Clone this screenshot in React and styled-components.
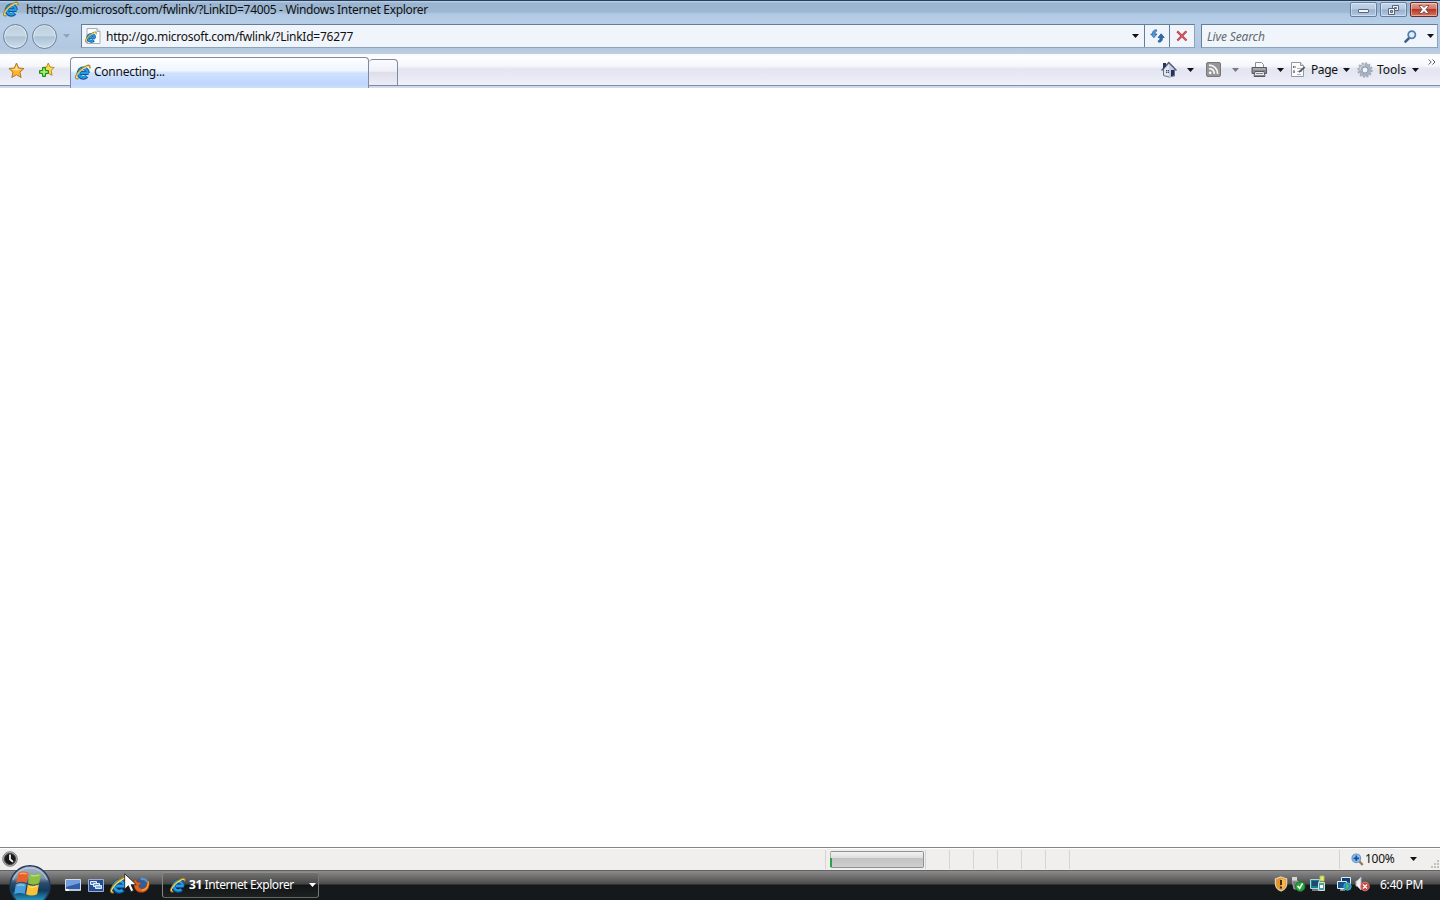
import React from 'react';
import styled, { createGlobalStyle } from 'styled-components';

const GlobalStyle = createGlobalStyle`
  * {
    box-sizing: border-box;
  }

  body {
    margin: 0;
    overflow: hidden;
    background: #fff;
    font-family: 'Noto Sans', 'Open Sans', sans-serif;
    font-size: 12px;
    line-height: 16px;
    color: #111;
  }

  svg {
    display: block;
    flex: none;
  }
`;

const Desktop = styled.div`
  position: relative;
  display: flex;
  flex-direction: column;
  width: 1440px;
  height: 900px;
  overflow: hidden;
`;

const Label = styled.span`
  white-space: pre;
  letter-spacing: ${(props) => props.$track || 0}px;
`;

const Frame = styled.header`
  height: 54px;
  background: linear-gradient(
    #233f62 0,
    #233f62 1px,
    #b9cbdf 1px,
    #b9cbdf 2px,
    #9ab3cf 3px,
    #9db7d3 12px,
    #b0c9e4 14px,
    #b9cfe8 24px,
    #b3c8e0 48px,
    #bfcfe1 54px
  );
`;

const TitleBar = styled.div`
  display: flex;
  align-items: center;
  height: 20px;
  padding: 0 2px 0 3px;

  > svg {
    margin-bottom: 2px;
  }
`;

const Title = styled(Label)`
  flex: 1;
  margin-left: 7px;
`;

const WindowButtons = styled.div`
  display: flex;
  gap: 3px;
  align-self: flex-start;
  margin-top: 2px;
`;

const WindowButton = styled.div`
  display: flex;
  align-items: center;
  justify-content: center;
  width: ${(props) => (props.$close ? 28 : 27)}px;
  height: 15px;
  border: 1px solid ${(props) => (props.$close ? '#652b31' : '#667f9f')};
  border-radius: 2px;
  box-shadow: inset 0 0 0 1px rgba(255, 255, 255, 0.4);
  background: ${(props) =>
    props.$close
      ? 'linear-gradient(#e3a296, #cf7567 45%, #b83626 50%, #d67659)'
      : 'linear-gradient(#c5d6e9, #b3c8e0 48%, #96b0cf 52%, #b1c9e5)'};
`;

const NavBar = styled.div`
  display: flex;
  align-items: center;
  height: 34px;
  padding: 0 2px 2px 3px;
`;

const RoundButton = styled.div`
  width: 25px;
  height: 25px;
  margin-right: 4px;
  border: 1px solid #6d8095;
  border-radius: 50%;
  box-shadow: inset 0 0 1px 1px rgba(238, 247, 255, 0.6);
  background: linear-gradient(#bccfe0 0, #c8d8e5 46%, #acc2d5 52%, #cbdeed 100%);
`;

const HistoryArrow = styled.div`
  width: 20px;
  padding-left: 2px;
`;

const Field = styled.div`
  display: flex;
  align-items: center;
  flex: none;
  width: ${(props) => props.$width}px;
  height: 24px;
  border: 1px solid #657d99;
  border-right-color: #8da3bd;
  border-bottom-color: #8da3bd;
  background: #f0f5fb;
`;

const AddressBar = styled(Field)`
  margin-right: 6px;
  padding-left: 3px;

  ${Label} {
    flex: 1;
    margin: 1px 0 0 5px;
  }
`;

const FieldButton = styled.div`
  display: flex;
  align-items: center;
  justify-content: center;
  width: ${(props) => props.$width}px;
  height: 22px;
  border-left: ${(props) => (props.$divided ? '1px solid #657d99' : '0')};
`;

const SearchText = styled(Label)`
  flex: 1;
  padding: 1px 0 0 5px;
  font-style: italic;
  color: #626972;
`;

const SearchButton = styled.div`
  width: 19px;
`;

const CommandBar = styled.div`
  display: flex;
  height: 34px;
  background: linear-gradient(
    #f7f9fd 0,
    #ffffff 3px,
    #f5f6fc 12px,
    #e3e5f0 15px,
    #e8ebf5 24px,
    #f0f3fb 31px,
    #858ea7 31px,
    #858ea7 32px,
    #ccd5e5 32px,
    #d5dfed 34px
  );
`;

const Favorites = styled.div`
  display: flex;
  gap: 13px;
  width: 70px;
  padding: 8px 0 0 8px;
`;

const ActiveTab = styled.div`
  display: flex;
  align-items: center;
  width: 299px;
  height: 31px;
  margin-top: 3px;
  padding: 0 0 2px 4px;
  border: 1px solid #8189a2;
  border-bottom: 0;
  border-radius: 4px 4px 0 0;
  background: linear-gradient(#ffffff, #edf5ff 43%, #cfe2ff 50%, #bed6fd 86%, #d0e0fa);

  ${Label} {
    margin-left: 3px;
  }
`;

const NewTab = styled.div`
  width: 29px;
  height: 27px;
  margin-top: 5px;
  border: 1px solid #8189a2;
  border-left: 0;
  border-radius: 4px 4px 0 0;
  background: linear-gradient(#fafbff, #f0f1f8 44%, #dedfea 50%, #eaedf7);
`;

const Commands = styled.div`
  display: flex;
  align-items: center;
  flex: 1;
  justify-content: flex-end;
  padding: 0 4px 3px 0;
`;

const Command = styled.div`
  display: flex;
  align-items: center;
  gap: ${(props) => props.$gap || 9}px;
  margin-right: ${(props) => props.$after}px;
`;

const CommandText = styled(Label)`
  width: ${(props) => props.$width}px;
`;

const Overflow = styled.div`
  align-self: flex-start;
  margin-top: 5px;
`;

const Page = styled.main`
  flex: 1;
  background: #fff;
`;

const StatusBar = styled.footer`
  display: flex;
  align-items: center;
  height: 23px;
  padding-left: 2px;
  border-top: 1px solid #868686;
  box-shadow: inset 0 1px #fff;
  background: #f0efed;
`;

const Spacer = styled.div`
  flex: 1;
`;

const StatusPane = styled.div`
  width: ${(props) => props.$width}px;
  height: 19px;
  border-left: 1px solid #d6d4d2;
`;

const ProgressPane = styled(StatusPane)`
  padding: 1px 0 0 4px;
`;

const Progress = styled.div`
  width: 94px;
  height: 17px;
  padding-top: 6px;
  border: 1px solid #909090;
  border-left-color: #a6aea6;
  border-radius: 2px;
  background: linear-gradient(#f3f3f3, #dedede 37%, #c2c2c2 42%, #cfcfcf);
`;

const ProgressChunk = styled.div`
  width: 2px;
  height: 9px;
  margin-left: -1px;
  background: #27a44a;
`;

const ZoomPane = styled(StatusPane)`
  display: flex;
  align-items: center;
  padding-left: 11px;

  ${Label} {
    width: 45px;
    margin-left: 1px;
  }
`;

const Grip = styled.div`
  align-self: flex-end;
`;

const Taskbar = styled.div`
  position: relative;
  display: flex;
  align-items: center;
  height: 30px;
  padding: 0 17px 0 64px;
  background: linear-gradient(#383838 0, #8b8b8b 1px, #6e6e6e 7px, #4b4b4b 14px, #15191b 15px, #14181a 30px);
  color: #fff;
`;

const StartButton = styled.div`
  position: absolute;
  left: 8px;
  top: -5px;
  height: 35px;
  overflow: hidden;
`;

const QuickLaunch = styled.div`
  display: flex;
  align-items: center;
  gap: 5px;
  width: 98px;
`;

const TaskButton = styled.div`
  display: flex;
  align-items: center;
  width: 157px;
  height: 26px;
  padding: 0 2px 0 7px;
  border: 1px solid #858585;
  border-color: #8c8c8c #777 #666 #858585;
  border-radius: 3px;
  background: linear-gradient(#737373, #444 46%, #121516 50%, #1d2021);

  ${Label} {
    flex: 1;
    margin-left: 3px;
  }
`;

const Tray = styled.div`
  display: flex;
  align-items: center;
  gap: 2px;
  margin-bottom: 3px;
`;

const TrayGap = styled.div`
  width: 6px;
`;

const Clock = styled(Label)`
  width: 43px;
  margin-left: 10px;
`;

const Pointer = styled.div`
  position: absolute;
  left: 124px;
  top: 873px;
`;

const Arrow = ({ color = '#101018', width = 7 }) => (
  <svg width={width} height="4" viewBox="0 0 7 4">
    <path d="M0 0h7L3.5 4z" fill={color} />
  </svg>
);

const IELogo = ({ size = 16 }) => (
  <svg width={size} height={size} viewBox="0 0 16 16" fill="none">
    <path d="M13.6 9H5.4M13 9a4.7 4.7 0 1 0-1.2 3.3" stroke="#0d559f" strokeWidth="3.8" />
    <path d="M13.7 8.9H5.6M12.8 8.7A4.5 4.5 0 1 0 11.2 12.4" stroke="#259be2" strokeWidth="2.2" />
    <path d="M4.8 7.1c1-2.4 3.3-3.5 5.6-2.6" stroke="#7bd2f8" strokeWidth="1" />
    <path d="M14.6 4.4c.7-2.6-.3-3.7-2.6-2.7C8 3.1 2.3 7.9 1.1 11.7c-.8 2.4.2 3.5 2.3 2.8" stroke="#9a8228" strokeWidth="1.6" />
    <path d="M14.3 3.3c-.2-1.6-1.6-1.3-3.2-.3C7.3 5 2.6 9.2 1.6 12.1c-.4 1.3-.1 2 .9 1.9" stroke="#f6db68" strokeWidth="1.1" />
  </svg>
);

const PageIcon = () => (
  <svg width="16" height="16" viewBox="0 0 16 16">
    <path d="M2 .5h10l3 3v12H2z" fill="#fff" stroke="#a4adb8" />
    <path d="M12 .5v3h3" fill="#dce2e9" stroke="#a4adb8" />
    <svg x="0" y="3" width="12" height="12">
      <IELogo size={12} />
    </svg>
  </svg>
);

const MinimizeIcon = () => (
  <svg width="13" height="11" viewBox="0 0 13 11">
    <rect x="1.5" y="5.5" width="10" height="3" rx=".5" fill="#f3f6fa" stroke="#586679" />
  </svg>
);

const RestoreIcon = () => (
  <svg width="13" height="12" viewBox="0 0 13 12" fill="#eef3f8" stroke="#586679">
    <path d="M5.5 1.5h6v5h-6z" />
    <path d="M7.5 3.5h2v1h-2z" />
    <path d="M1.5 4.5h6v6h-6z" />
    <path d="M3.5 6.5h2v2h-2z" fill="#9eb2c9" />
  </svg>
);

const CloseIcon = () => (
  <svg width="12" height="11" viewBox="0 0 12 11">
    <path d="M1 1.5h3l2 2 2-2h3L8 5.5l3 4H8l-2-2-2 2H1l3-4z" fill="#fff" stroke="#65434a" strokeWidth=".8" />
  </svg>
);

const RefreshIcon = () => (
  <svg width="15" height="14" viewBox="0 0 15 14" stroke="#1d5590" strokeWidth=".7">
    <path d="M6.3.7C3.5.9 2.4 2.4 2.5 5H.7l3.2 3.7L7 5H5.1c0-1.5.2-2.4 1.7-3z" fill="#559bdf" />
    <path d="M8.6 13.2c3 0 4-1.6 3.9-4.7h1.8L11.1 4.8 8 8.5h1.9c0 2-.3 2.8-1.8 3.4z" fill="#2a6db5" />
  </svg>
);

const StopIcon = () => (
  <svg width="12" height="12" viewBox="0 0 12 12">
    <path d="M1.2 1.4l9.3 9.1M10.4 1.2l-9 9.4" fill="none" stroke="#b5404c" strokeWidth="2.2" />
    <path d="M1.4 1.4l8.7 8.7M9.9 1.6l-8.2 8.5" fill="none" stroke="#e0606a" strokeWidth="1" />
  </svg>
);

const SearchIcon = () => (
  <svg width="13" height="13" viewBox="0 0 13 13" fill="none">
    <path d="M5.5 7.6l-4 4" stroke="#365f91" strokeWidth="2.6" strokeLinecap="round" />
    <circle cx="7.8" cy="4.8" r="3.6" fill="#dfeefa" stroke="#527eac" strokeWidth="1.8" />
  </svg>
);

const StarIcon = () => (
  <svg width="17" height="17" viewBox="0 0 17 17">
    <path d="M8.5 1l2.1 5 5.4.5-4.1 3.6 1.2 5.4-4.6-2.8-4.7 2.8L5 10.1.9 6.5 6.4 6z" fill="#ffb52e" stroke="#b0752a" />
    <path d="M8.5 3l1.2 4 3.6.4-5 1.1-4.6-1 3.5-.6z" fill="#ffe798" />
  </svg>
);

const AddStarIcon = () => (
  <svg width="17" height="17" viewBox="0 0 17 17">
    <path d="M10.3 1l1.7 4 4.1.5-3 3 1 4.9-4-2.4-4 2.4 1-5-3-2.9 4.5-.5z" fill="#ffd84c" stroke="#bd8b24" />
    <path d="M4.5 5.5h3v3h3v3h-3v3h-3v-3h-3v-3h3z" fill="#68d52e" stroke="#278b24" />
    <path d="M6 7v6M3 10h6" stroke="#c1f79b" />
  </svg>
);

const HomeIcon = () => (
  <svg width="16" height="17" viewBox="0 0 16 17">
    <path d="M2.5 8v6.5L8 16l5.5-1V7L8 2z" fill="#e1e5ef" stroke="#68738a" />
    <path d="M8 2l5 6v7l-5 1z" fill="#c7cde0" />
    <path d="M.5 9.5L7.8 1.5l7.7 8" fill="none" stroke="#56617d" strokeWidth="1.5" />
    <path d="M2 2h3v3L2 8z" fill="#29325a" />
    <path d="M10 9h3v5.6l-3 .8z" fill="#26315a" />
    <path d="M5 9h3v3H5z" fill="#3f4b70" />
    <path d="M6.5 9v3M5 10.5h3" stroke="#fff" strokeWidth=".5" />
  </svg>
);

const FeedIcon = () => (
  <svg width="15" height="15" viewBox="0 0 15 15" fill="none">
    <rect x=".5" y=".5" width="14" height="14" rx="1.5" fill="#969696" stroke="#777" />
    <path d="M3 3.2c5 0 8.6 3.7 8.7 8.7M3 6.6c3.1 0 5.2 2.2 5.3 5.3" stroke="#f6f6f6" strokeWidth="1.7" />
    <circle cx="4.2" cy="10.8" r="1.4" fill="#fff" />
  </svg>
);

const PrinterIcon = () => (
  <svg width="17" height="16" viewBox="0 0 17 16" stroke="#565a63">
    <path d="M4.5 6V.5h6l2 2V6" fill="#f8f9fb" stroke="#8b8f98" />
    <path d="M1 5.5h14.5v6H1z" fill="#85898f" />
    <path d="M2 7h12.5" stroke="#c5c8cc" />
    <path d="M4 9.5h9l1 5H3z" fill="#eee" />
    <path d="M5 11.5h7M4 13.5h9" stroke="#555963" strokeWidth=".7" />
  </svg>
);

const PageMenuIcon = () => (
  <svg width="17" height="17" viewBox="0 0 17 17" fill="none">
    <path d="M1.5 1.5h9l3 3v11h-12z" fill="#fbfbfc" stroke="#9499a1" />
    <path d="M10.5 1.5v3h3" fill="#ddd" stroke="#9499a1" />
    <path d="M3.5 5v2M5 5v2M3 11h2M4 9v3" stroke="#666b72" />
    <path d="M7 7.5h5M7 10.5h5M7 13.5h4" stroke="#b1b4b8" />
    <path d="M9 11l5.8-4.8" stroke="#55595f" strokeWidth="1.7" />
  </svg>
);

const GearIcon = () => (
  <svg width="16" height="16" viewBox="0 0 16 16" fill="none">
    <circle cx="8" cy="8" r="6.8" stroke="#a0a8b4" strokeWidth="1.8" strokeDasharray="2 1.56" />
    <circle cx="8" cy="8" r="4.9" fill="#c2cad6" stroke="#a7b0be" strokeWidth="3" />
    <circle cx="8" cy="8" r="3.1" fill="#f0f2f8" stroke="#7f94ae" />
    <path d="M3 8A5 5 0 0 1 8 3" stroke="#dfe4ec" />
  </svg>
);

const MoreIcon = () => (
  <svg width="8" height="6" viewBox="0 0 8 6" fill="none" stroke="#555a64">
    <path d="M.7.5L3.2 3 .7 5.5M4.5.5L7 3 4.5 5.5" />
  </svg>
);

const BusyIcon = () => (
  <svg width="16" height="16" viewBox="0 0 16 16">
    <circle cx="8" cy="8" r="7.3" fill="#aeaeae" stroke="#838383" />
    <circle cx="8" cy="8" r="5.6" fill="#171717" stroke="#454545" />
    <path d="M8 3.5v4.8l3 2.6" fill="none" stroke="#f4f4f4" strokeWidth="1.8" />
  </svg>
);

const ZoomIcon = () => (
  <svg width="13" height="13" viewBox="0 0 13 13">
    <path d="M8 8l3.7 4" stroke="#9a785a" strokeWidth="2.4" />
    <circle cx="5.3" cy="5.3" r="4.3" fill="#8fc3ef" stroke="#6b99c9" strokeWidth="1.2" />
    <path d="M5.3 2.5v5.6M2.5 5.3h5.6" stroke="#174d96" strokeWidth="1.7" />
  </svg>
);

const ResizeGrip = () => (
  <svg width="10" height="9" viewBox="0 0 10 9" fill="#aaa8a5">
    <path d="M7 0h2v2H7zM4 3h2v2H4zM7 3h2v2H7zM1 6h2v2H1zM4 6h2v2H4zM7 6h2v2H7z" opacity=".65" />
  </svg>
);

const WindowsOrb = () => (
  <svg width="44" height="42" viewBox="0 0 44 42">
    <defs>
      <linearGradient id="orb" x1="0" y1="0" x2="0" y2="1">
        <stop offset="0" stopColor="#a9b9ce" />
        <stop offset=".3" stopColor="#7f95ae" />
        <stop offset=".43" stopColor="#2d4c69" />
        <stop offset=".62" stopColor="#123a5c" />
        <stop offset=".85" stopColor="#2493bd" />
        <stop offset="1" stopColor="#38c4e4" />
      </linearGradient>
    </defs>
    <circle cx="22" cy="20.8" r="20" fill="url(#orb)" stroke="#22395a" strokeWidth="1.4" />
    <path d="M5 15a18 18 0 0 1 34 0" fill="none" stroke="#d9e1e9" strokeWidth="1" opacity=".6" />
    <g transform="translate(-3.2 -2) scale(1.13)">
      <path d="M12.2 8.7c3.1-1.8 5.6-1.3 8.7.1l-1.5 9c-3.3-1.5-6-1.6-9.3 0z" fill="#e8602c" />
      <path d="M22.1 9.2c3.3 1.5 6 1.4 10.1-.4l-1.7 9c-3.6 1.8-6.7 1.7-10 .2z" fill="#8dbf43" />
      <path d="M9.8 18.9c3.4-1.7 6.2-1.5 9.3-.1l-1.4 8.7c-3.4-1.4-6.2-1.3-9.4.2z" fill="#4b9fdc" />
      <path d="M20.3 19.1c3.2 1.5 6.2 1.5 9.9-.2l-1.6 8.7c-3.4 1.7-6.7 1.5-9.8 0z" fill="#fbc233" />
      <path d="M13.2 9.7c2-.9 3.7-.9 6.1-.1M23.2 11c2.4.8 4.6.6 7.3-.5M11.1 20c2.2-.9 4-.9 6.2-.1M21.6 21.1c2.4.7 4.5.5 7-.6" fill="none" stroke="#fff5ba" strokeWidth="1.2" opacity=".5" />
    </g>
  </svg>
);

const DesktopIcon = () => (
  <svg width="18" height="16" viewBox="0 0 18 16">
    <path d="M1.5 2.5h15v11h-15z" fill="#315da8" stroke="#d4dbe5" />
    <path d="M2 3h14v3L2 10z" fill="#739ddd" />
    <path d="M2 12h14v2H2z" fill="#b9c7d9" />
    <path d="M2 14c-1-3 3-3 3 0z" fill="#fff" />
  </svg>
);

const SwitcherIcon = () => (
  <svg width="18" height="16" viewBox="0 0 18 16" stroke="#e4edf8">
    <path d="M1.5 2.5h15v12h-15z" fill="#244d94" stroke="#9cafcf" />
    <path d="M3.5 4.5h6v3h-6z" fill="#6287c3" />
    <path d="M6.5 6.5h6v3h-6z" fill="#7197cf" />
    <path d="M8.5 8.5h6v3h-6z" fill="#8bb2e5" />
  </svg>
);

const FirefoxIcon = () => (
  <svg width="17" height="17" viewBox="0 0 16 16">
    <circle cx="8" cy="7" r="6" fill="#315e9c" />
    <path d="M7 2c4-1 6 1 6 3" fill="none" stroke="#5d8fc9" strokeWidth="2" />
    <path d="M1.8 1.8c-2.6 6.4.2 12.6 6.2 12.6 5.5 0 8.6-5 6.5-11-.1 2-.7 2.7-1.5 3.2 0 3-2.1 4.8-4.7 4.5-2.2-.3-3.3-2-2.7-3.7l2.3-1C6.7 5.1 5.4 5 4.2 5z" fill="#df651f" stroke="#a83712" strokeWidth=".6" />
    <path d="M14.4 4c.4 5-2.2 8.3-6.1 8.4" fill="none" stroke="#f7a431" strokeWidth="1.4" />
  </svg>
);

const ShieldIcon = () => (
  <svg width="14" height="16" viewBox="0 0 14 16">
    <path d="M7 1l5.7 2v5c0 3.2-2.3 5.6-5.7 7-3.3-1.4-5.6-3.8-5.6-7V3z" fill="#e2952a" stroke="#ddd0b5" strokeWidth="1.2" />
    <path d="M7 2.3L11.4 4v4c0 2.4-1.7 4.3-4.4 5.6z" fill="#f6b64b" />
    <path d="M7 4v5M7 10.5v2" stroke="#3f2a17" strokeWidth="2" />
  </svg>
);

const DeviceIcon = () => (
  <svg width="17" height="16" viewBox="0 0 17 16">
    <path d="M2 1h5v4H2z" fill="#d6d8d8" />
    <path d="M2 5h6v8H4z" fill="#777f80" stroke="#9b9f9f" />
    <circle cx="10.2" cy="10.5" r="4.8" fill="#25a53a" stroke="#1d7829" />
    <path d="M7.5 10l2.1 2.4 3-5" fill="none" stroke="#fff" strokeWidth="1.6" />
  </svg>
);

const VirtualIcon = () => (
  <svg width="17" height="17" viewBox="0 0 17 17">
    <path d="M1.5 4.5h9v9h-9z" fill="#167f91" stroke="#a9d7d9" />
    <path d="M3 6h6v5H3z" fill="#204b6e" />
    <path d="M11 1h4v5h-4z" fill="#e5ec70" stroke="#b5bc58" />
    <path d="M9.5 7.5h6v8h-6z" fill="#4f9ea3" stroke="#d0dfd7" />
    <path d="M11 10h3v3h-3z" fill="#fff" />
    <path d="M3 15h6" stroke="#cddbdb" />
  </svg>
);

const NetworkIcon = () => (
  <svg width="16" height="16" viewBox="0 0 16 16">
    <path d="M5.5 1.5h9v8h-9z" fill="#123f70" stroke="#d9edff" />
    <path d="M1.5 5.5h9v7h-9z" fill="#17578d" stroke="#d9edff" />
    <path d="M4 14h5M6 12v2" stroke="#dcecff" />
    <circle cx="11.5" cy="10.5" r="3.7" fill="#2491bb" stroke="#4fa9cf" />
    <path d="M10 8l3 1-1 3-2 1z" fill="#4fbd54" />
  </svg>
);

const VolumeIcon = () => (
  <svg width="16" height="16" viewBox="0 0 16 16">
    <path d="M2 5h1l4-4v13l-4-4H2z" fill="#eee" stroke="#aeb2b6" />
    <circle cx="11" cy="10.5" r="4.3" fill="#d23a35" stroke="#ef9d94" strokeWidth=".7" />
    <path d="M9 8.5l4 4M13 8.5l-4 4" stroke="#fff" strokeWidth="1.5" />
  </svg>
);

const PointerIcon = () => (
  <svg width="13" height="20" viewBox="0 0 13 20">
    <path d="M.7.8v15.4l3.7-3.5 2.5 6 2.8-1.2-2.6-5.8h5.2z" fill="#fff" stroke="#161616" strokeWidth=".8" />
  </svg>
);

const panes = [24, 24, 24, 24, 24, 24];

export default function App() {
  return (
    <Desktop>
      <GlobalStyle />
      <Frame>
        <TitleBar>
          <IELogo />
          <Title $track={-0.33}>https://go.microsoft.com/fwlink/?LinkID=74005 - Windows Internet Explorer</Title>
          <WindowButtons>
            <WindowButton><MinimizeIcon /></WindowButton>
            <WindowButton><RestoreIcon /></WindowButton>
            <WindowButton $close><CloseIcon /></WindowButton>
          </WindowButtons>
        </TitleBar>
        <NavBar>
          <RoundButton />
          <RoundButton />
          <HistoryArrow><Arrow color="#8ea5bd" /></HistoryArrow>
          <AddressBar $width={1114}>
            <PageIcon />
            <Label $track={-0.25}>http://go.microsoft.com/fwlink/?LinkId=76277</Label>
            <FieldButton $width={18}><Arrow /></FieldButton>
            <FieldButton $width={25} $divided><RefreshIcon /></FieldButton>
            <FieldButton $width={25} $divided><StopIcon /></FieldButton>
          </AddressBar>
          <Field $width={237}>
            <SearchText $track={-0.15}>Live Search</SearchText>
            <SearchButton><SearchIcon /></SearchButton>
            <FieldButton $width={14}><Arrow /></FieldButton>
          </Field>
        </NavBar>
      </Frame>
      <CommandBar>
        <Favorites>
          <StarIcon />
          <AddStarIcon />
        </Favorites>
        <ActiveTab>
          <IELogo />
          <Label $track={-0.25}>Connecting...</Label>
        </ActiveTab>
        <NewTab />
        <Commands>
          <Command $after={12} $gap={10}><HomeIcon /><Arrow /></Command>
          <Command $after={12} $gap={11}><FeedIcon /><Arrow color="#77778e" /></Command>
          <Command $after={6}><PrinterIcon /><Arrow /></Command>
          <Command $after={7} $gap={4}><PageMenuIcon /><CommandText $width={28} $track={-0.4}>Page</CommandText><Arrow /></Command>
          <Command $after={9} $gap={4}><GearIcon /><CommandText $width={31}>Tools</CommandText><Arrow /></Command>
          <Overflow><MoreIcon /></Overflow>
        </Commands>
      </CommandBar>
      <Page />
      <StatusBar>
        <BusyIcon />
        <Spacer />
        <ProgressPane $width={100}>
          <Progress><ProgressChunk /></Progress>
        </ProgressPane>
        {panes.map((width, index) => <StatusPane key={index} $width={width} />)}
        <StatusPane $width={270} />
        <ZoomPane $width={101}>
          <ZoomIcon />
          <Label $track={-0.3}>100%</Label>
          <Arrow />
          <Spacer />
          <Grip><ResizeGrip /></Grip>
        </ZoomPane>
      </StatusBar>
      <Taskbar>
        <StartButton><WindowsOrb /></StartButton>
        <QuickLaunch>
          <DesktopIcon />
          <SwitcherIcon />
          <IELogo size={18} />
          <FirefoxIcon />
        </QuickLaunch>
        <TaskButton>
          <IELogo />
          <Label $track={-0.42}><b>31</b> Internet Explorer</Label>
          <Arrow color="#fff" />
        </TaskButton>
        <Spacer />
        <Tray>
          <ShieldIcon />
          <DeviceIcon />
          <VirtualIcon />
          <TrayGap />
          <NetworkIcon />
          <VolumeIcon />
        </Tray>
        <Clock $track={-0.3}>6:40 PM</Clock>
      </Taskbar>
      <Pointer><PointerIcon /></Pointer>
    </Desktop>
  );
}
